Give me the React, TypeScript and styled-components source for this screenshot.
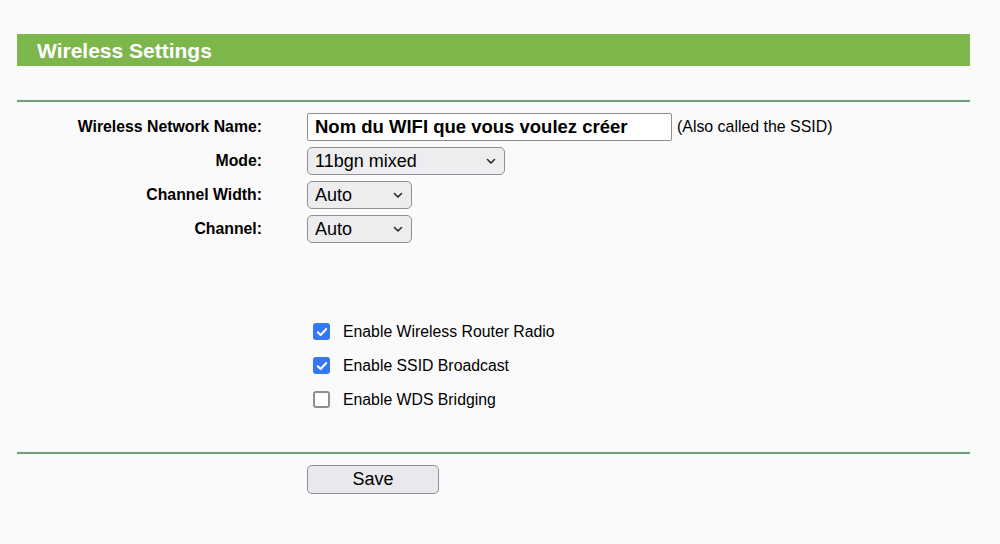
import React from 'react'
import styled, { createGlobalStyle } from 'styled-components'

const GlobalStyle = createGlobalStyle`
  html, body {
    margin: 0;
    padding: 0;
    background: #fafafa;
    font-family: 'Liberation Sans', Arial, sans-serif;
    color: #000;
  }
`

const Chevron: React.FC = () => (
  <svg width="10" height="7" viewBox="0 0 10 7">
    <path d="M1.5 1.5 L5 5 L8.5 1.5" fill="none" stroke="#222" strokeWidth="1.5" strokeLinecap="round" strokeLinejoin="round" />
  </svg>
)

const CheckMark: React.FC = () => (
  <svg width="12" height="10" viewBox="0 0 12 10">
    <path d="M1.8 5.2 L4.6 8 L10.2 2" fill="none" stroke="#fff" strokeWidth="2" strokeLinecap="round" strokeLinejoin="round" />
  </svg>
)

const options = [
  { label: 'Enable Wireless Router Radio', checked: true },
  { label: 'Enable SSID Broadcast', checked: true },
  { label: 'Enable WDS Bridging', checked: false },
]

const App: React.FC = () => (
  <Page>
    <GlobalStyle />
    <TitleBar>Wireless Settings</TitleBar>
    <Divider top={34} />
    <FormGrid>
      <Label>Wireless Network Name:</Label>
      <Control>
        <TextInput>Nom du WIFI que vous voulez créer</TextInput>
        <Hint>(Also called the SSID)</Hint>
      </Control>
      <Label>Mode:</Label>
      <Control>
        <SelectBox width={198}>
          <span>11bgn mixed</span>
          <Chevron />
        </SelectBox>
      </Control>
      <Label>Channel Width:</Label>
      <Control>
        <SelectBox width={105}>
          <span>Auto</span>
          <Chevron />
        </SelectBox>
      </Control>
      <Label>Channel:</Label>
      <Control>
        <SelectBox width={105}>
          <span>Auto</span>
          <Chevron />
        </SelectBox>
      </Control>
    </FormGrid>
    <CheckList>
      {options.map((o) => (
        <CheckRow key={o.label}>
          <CheckBox checked={o.checked}>{o.checked && <CheckMark />}</CheckBox>
          <CheckLabel>{o.label}</CheckLabel>
        </CheckRow>
      ))}
    </CheckList>
    <Divider top={0} />
    <ButtonRow>
      <SaveButton>Save</SaveButton>
    </ButtonRow>
  </Page>
)

const Page = styled.div`
  width: 953px;
  padding: 34px 0 0 17px;
  display: flex;
  flex-direction: column;
`

const TitleBar = styled.div`
  height: 32px;
  background: #7db74b;
  color: #fff;
  font-size: 21px;
  font-weight: bold;
  line-height: 33px;
  padding-left: 20px;
`

const Divider = styled.div<{ top: number }>`
  height: 2px;
  background: #72a07f;
  box-shadow: 0 0 1px #b9d0bf;
  margin-top: ${(p) => p.top}px;
`

const FormGrid = styled.div`
  display: grid;
  grid-template-columns: 245px auto;
  column-gap: 45px;
  row-gap: 6px;
  margin-top: 11px;
`

const Label = styled.div`
  text-align: right;
  font-size: 15.8px;
  font-weight: bold;
  line-height: 28px;
`

const Control = styled.div`
  display: flex;
  align-items: center;
  height: 28px;
`

const TextInput = styled.div`
  box-sizing: border-box;
  width: 365px;
  height: 28px;
  background: #fff;
  border: 1px solid #8d8d8d;
  border-radius: 2px;
  font-size: 18.5px;
  font-weight: bold;
  line-height: 26px;
  padding-left: 7px;
  white-space: nowrap;
  overflow: hidden;
`

const Hint = styled.span`
  font-size: 15.9px;
  margin-left: 5px;
`

const SelectBox = styled.div<{ width: number }>`
  box-sizing: border-box;
  width: ${(p) => p.width}px;
  height: 28px;
  display: flex;
  align-items: center;
  justify-content: space-between;
  padding: 0 8px 0 7px;
  background: #ededf0;
  border: 1px solid #8f8f96;
  border-radius: 5px;
  font-size: 18px;
`

const CheckList = styled.div`
  display: flex;
  flex-direction: column;
  gap: 17px;
  margin: 80px 0 44px 296px;
`

const CheckRow = styled.div`
  display: flex;
  align-items: center;
  height: 17px;
`

const CheckBox = styled.div<{ checked: boolean }>`
  box-sizing: border-box;
  width: 17px;
  height: 17px;
  border-radius: 3px;
  display: flex;
  align-items: center;
  justify-content: center;
  background: ${(p) => (p.checked ? '#3478f6' : '#fff')};
  border: ${(p) => (p.checked ? 'none' : '2px solid #8e8e95')};
`

const CheckLabel = styled.span`
  font-size: 15.8px;
  margin-left: 13px;
`

const ButtonRow = styled.div`
  display: flex;
  padding: 11px 0 0 290px;
`

const SaveButton = styled.button`
  box-sizing: border-box;
  width: 132px;
  height: 29px;
  background: #e9e9ed;
  border: 1px solid #8f8f9d;
  border-radius: 5px;
  font-family: 'Liberation Sans', Arial, sans-serif;
  font-size: 18px;
  color: #000;
  padding: 0;
`

export default App
